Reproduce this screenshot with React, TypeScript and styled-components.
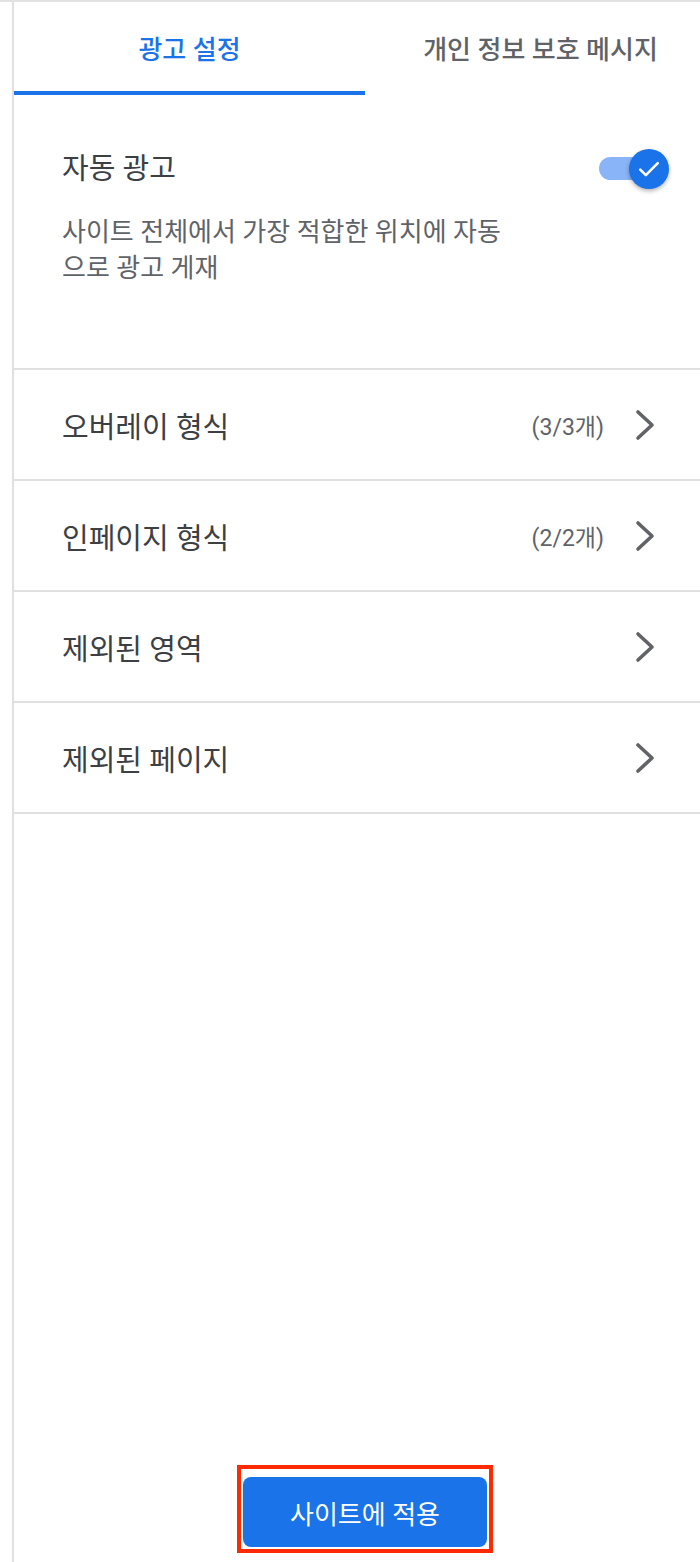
import React, { useState } from 'react';
import styled, { createGlobalStyle } from 'styled-components';

const GlobalStyle = createGlobalStyle`
  html, body {
    margin: 0;
    padding: 0;
    background: #fff;
    overflow-x: hidden;
  }
  body {
    font-family: Roboto, 'Noto Sans CJK KR', sans-serif;
  }
`;

type Row = { label: string; count?: string };

const rows: Row[] = [
  { label: '오버레이 형식', count: '(3/3개)' },
  { label: '인페이지 형식', count: '(2/2개)' },
  { label: '제외된 영역' },
  { label: '제외된 페이지' },
];

const App: React.FC = () => {
  const [tab, setTab] = useState(0);
  const [autoAds, setAutoAds] = useState(true);

  return (
    <>
      <GlobalStyle />
      <Page>
        <Panel>
          <TabBar>
            <Tab $active={tab === 0} onClick={() => setTab(0)}>광고 설정</Tab>
            <Tab $active={tab === 1} onClick={() => setTab(1)}>개인 정보 보호 메시지</Tab>
          </TabBar>

          <AutoSection>
            <SectionHeader>
              <SectionTitle>자동 광고</SectionTitle>
              <Toggle $on={autoAds} onClick={() => setAutoAds(!autoAds)}>
                <Track $on={autoAds} />
                <Thumb $on={autoAds}>
                  {autoAds && (
                    <svg width="28" height="28" viewBox="0 0 24 24">
                      <path d="M4.5 12.5l4.8 4.8L19.5 7" fill="none" stroke="#fff" strokeWidth="2.2" strokeLinecap="round" strokeLinejoin="round" />
                    </svg>
                  )}
                </Thumb>
              </Toggle>
            </SectionHeader>
            <Description>사이트 전체에서 가장 적합한 위치에 자동으로 광고 게재</Description>
          </AutoSection>

          {rows.map(row => (
            <ListRow key={row.label}>
              <RowLabel>{row.label}</RowLabel>
              {row.count && <RowCount>{row.count}</RowCount>}
              <Chevron width="20" height="32" viewBox="0 0 20 32">
                <polyline points="3,3 17,16 3,29" fill="none" stroke="#616366" strokeWidth="3.6" strokeLinecap="round" strokeLinejoin="round" />
              </Chevron>
            </ListRow>
          ))}

          <Spacer />

          <Footer>
            <Highlight>
              <ApplyButton>사이트에 적용</ApplyButton>
            </Highlight>
          </Footer>
        </Panel>
      </Page>
    </>
  );
};

const Page = styled.div`
  min-height: 100vh;
  box-sizing: border-box;
  border-top: 2px solid #e2e2e2;
  padding-left: 12px;
  display: flex;
  overflow: hidden;
`;

const Panel = styled.div`
  flex: 0 0 702px;
  width: 702px;
  border-left: 2px solid #e0e0e0;
  display: flex;
  flex-direction: column;
  min-height: calc(100vh - 2px);
`;

const TabBar = styled.div`
  display: grid;
  grid-template-columns: 351px 351px;
  height: 93px;
`;

const Tab = styled.div<{ $active: boolean }>`
  display: flex;
  align-items: center;
  justify-content: center;
  box-sizing: border-box;
  padding-top: 2px;
  border-bottom: 4px solid ${p => (p.$active ? '#1a73e8' : 'transparent')};
  color: ${p => (p.$active ? '#1a73e8' : '#5f6368')};
  font-size: 26px;
  font-weight: 500;
  cursor: pointer;
`;

const AutoSection = styled.div`
  padding: 54px 47px 82px 48px;
  border-bottom: 2px solid #e0e0e0;
`;

const SectionHeader = styled.div`
  display: flex;
  align-items: center;
  justify-content: space-between;
  height: 40px;
`;

const SectionTitle = styled.div`
  font-size: 29px;
  font-weight: 400;
  color: #3c4043;
  line-height: 40px;
`;

const Toggle = styled.div<{ $on: boolean }>`
  position: relative;
  width: 70px;
  height: 40px;
  cursor: pointer;
`;

const Track = styled.div<{ $on: boolean }>`
  position: absolute;
  left: 0;
  top: 8px;
  width: 58px;
  height: 23px;
  border-radius: 12px;
  background: ${p => (p.$on ? '#8ab4f8' : '#bdc1c6')};
`;

const Thumb = styled.div<{ $on: boolean }>`
  position: absolute;
  top: 0;
  left: ${p => (p.$on ? '30px' : '0')};
  width: 40px;
  height: 40px;
  border-radius: 50%;
  background: ${p => (p.$on ? '#1a73e8' : '#fff')};
  box-shadow: 0 2px 4px rgba(0, 0, 0, 0.3);
  display: flex;
  align-items: center;
  justify-content: center;
`;

const Description = styled.div`
  margin-top: 25px;
  max-width: 445px;
  font-size: 26px;
  line-height: 36px;
  color: #5f6368;
  word-break: break-all;
`;

const ListRow = styled.div`
  display: flex;
  align-items: center;
  height: 109px;
  padding: 0 61px 0 48px;
  border-bottom: 2px solid #e0e0e0;
  cursor: pointer;
`;

const RowLabel = styled.div`
  flex: 1;
  font-size: 29px;
  font-weight: 400;
  color: #3c4043;
`;

const RowCount = styled.div`
  font-size: 23px;
  color: #5f6368;
  margin-right: 31px;
`;

const Chevron = styled.svg`
  display: block;
  flex: 0 0 auto;
`;

const Spacer = styled.div`
  flex: 1;
`;

const Footer = styled.div`
  display: flex;
  justify-content: center;
  padding-bottom: 9px;
`;

const Highlight = styled.div`
  border: 4px solid #ff2a00;
  padding: 8px 2px 2px 2px;
`;

const ApplyButton = styled.button`
  display: block;
  width: 244px;
  height: 70px;
  border: none;
  border-radius: 8px;
  background: #1a73e8;
  color: #fff;
  font-family: Roboto, 'Noto Sans CJK KR', sans-serif;
  font-size: 26px;
  font-weight: 400;
  cursor: pointer;
`;

export default App;
